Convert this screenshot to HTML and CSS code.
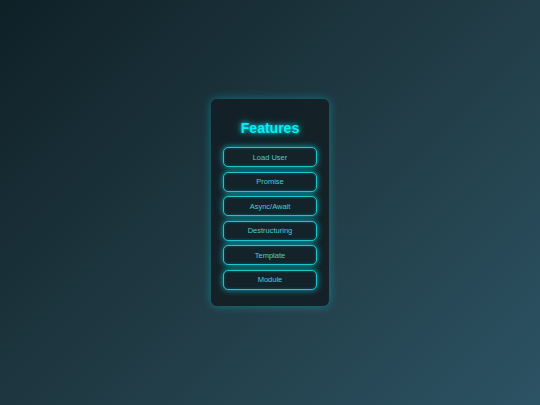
FILE: index.html
```html
<!DOCTYPE html>
<html>
<head>
<meta charset="utf-8">
<link rel="stylesheet" href="styles.css">
</head>
<body>
<div class="card">
  <h1 class="title">Features</h1>
  <div class="list">
    <button class="btn">Load User</button>
    <button class="btn">Promise</button>
    <button class="btn">Async/Await</button>
    <button class="btn">Destructuring</button>
    <button class="btn">Template</button>
    <button class="btn">Module</button>
  </div>
</div>
</body>
</html>
```
FILE: styles.css
```css
html, body {
  margin: 0;
  height: 100%;
}
body {
  background: linear-gradient(135deg, #0f2027 0%, #203a43 50%, #2c5364 100%);
  font-family: "Liberation Sans", Arial, sans-serif;
  display: flex;
  align-items: center;
  justify-content: center;
}
.card {
  width: 94px;
  padding: 17px 12px 16px;
  background: rgba(20, 32, 38, 0.95);
  border-radius: 6px;
  box-shadow: 0 0 10px rgba(0, 220, 230, 0.4);
}
.title {
  margin: 0 0 7px;
  font-size: 14px;
  line-height: 24px;
  font-weight: bold;
  text-align: center;
  color: #00f0f5;
  text-shadow: 0 0 4px rgba(0, 255, 255, 0.8), 0 0 8px rgba(0, 255, 255, 0.5);
}
.list {
  display: flex;
  flex-direction: column;
  gap: 4.5px;
}
.btn {
  height: 20px;
  box-sizing: border-box;
  border: 1.5px solid #1cc6ca;
  border-radius: 5px;
  background: #14232a;
  color: #45cfd3;
  font-family: "Liberation Sans", Arial, sans-serif;
  font-size: 7.5px;
  padding: 0;
  box-shadow: 0 0 6px rgba(0, 230, 240, 0.7), inset 0 0 3px rgba(0, 230, 240, 0.3);
}
```
